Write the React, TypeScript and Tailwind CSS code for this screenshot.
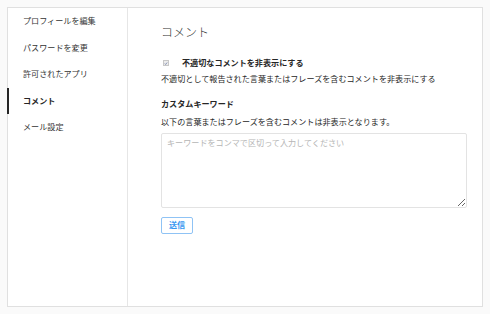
import React from "react";

const menu = ["プロフィールを編集", "パスワードを変更", "許可されたアプリ", "コメント", "メール設定"];

export default function App() {
  const active = "コメント";
  return (
    <div
      className="w-[490px] h-[314px] bg-[#fafafa] p-[7px] text-[#262626]"
      style={{ fontFamily: '"Noto Sans CJK JP", "Noto Sans", sans-serif' }}
    >
      <div className="flex w-[476px] h-[300px] bg-white border border-[#e0e0e0]">
        <ul className="w-[120px] shrink-0 border-r border-[#e6e6e6]">
          {menu.map((m) =>
            m === active ? (
              <li
                key={m}
                className="-ml-px h-[26.5px] flex items-center border-l-2 border-[#262626] pl-[14px] text-[8.1px] font-bold"
              >
                {m}
              </li>
            ) : (
              <li key={m} className="h-[26.5px] flex items-center pl-[15px] text-[8.1px] text-[#333]">
                {m}
              </li>
            )
          )}
        </ul>

        <div className="flex-1 pl-[33px] pr-[15px] pt-[16px]">
          <h2 className="text-[12px] leading-[16px] font-light text-[#333]">コメント</h2>

          <label className="mt-[15px] flex items-center h-[16px] text-[8.1px] font-bold">
            <span className="ml-[2px] mr-[13px] flex items-center justify-center w-[6px] h-[6px] border border-[#c8c8c8] bg-[#ececec]">
              <svg width="5" height="5" viewBox="0 0 10 10">
                <path d="M2 5 L4 7.5 L8 2.5" fill="none" stroke="#5a6a9a" strokeWidth="1.6" />
              </svg>
            </span>
            不適切なコメントを非表示にする
          </label>
          <p className="h-[16px] leading-[16px] text-[8.1px]">
            不適切として報告された言葉またはフレーズを含むコメントを非表示にする
          </p>

          <h3 className="mt-[9px] h-[16px] leading-[16px] text-[8.1px] font-bold">カスタムキーワード</h3>
          <p className="mt-[2px] h-[16px] leading-[16px] text-[8.1px]">
            以下の言葉またはフレーズを含むコメントは非表示となります。
          </p>

          <textarea
            className="mt-[3px] block w-[306px] h-[75px] border border-[#e3e3e3] rounded-[2px] pl-[5px] pt-[3px] text-[8.1px] leading-[12px] outline-none placeholder:text-[#b5b5b5]"
            placeholder="キーワードをコンマで区切って入力してください"
          />

          <button className="mt-[9px] w-[32px] h-[17px] flex items-center justify-center border border-[#8fc3f5] rounded-[2px] bg-white text-[8.1px] font-bold text-[#3897f0]">
            送信
          </button>
        </div>
      </div>
    </div>
  );
}
